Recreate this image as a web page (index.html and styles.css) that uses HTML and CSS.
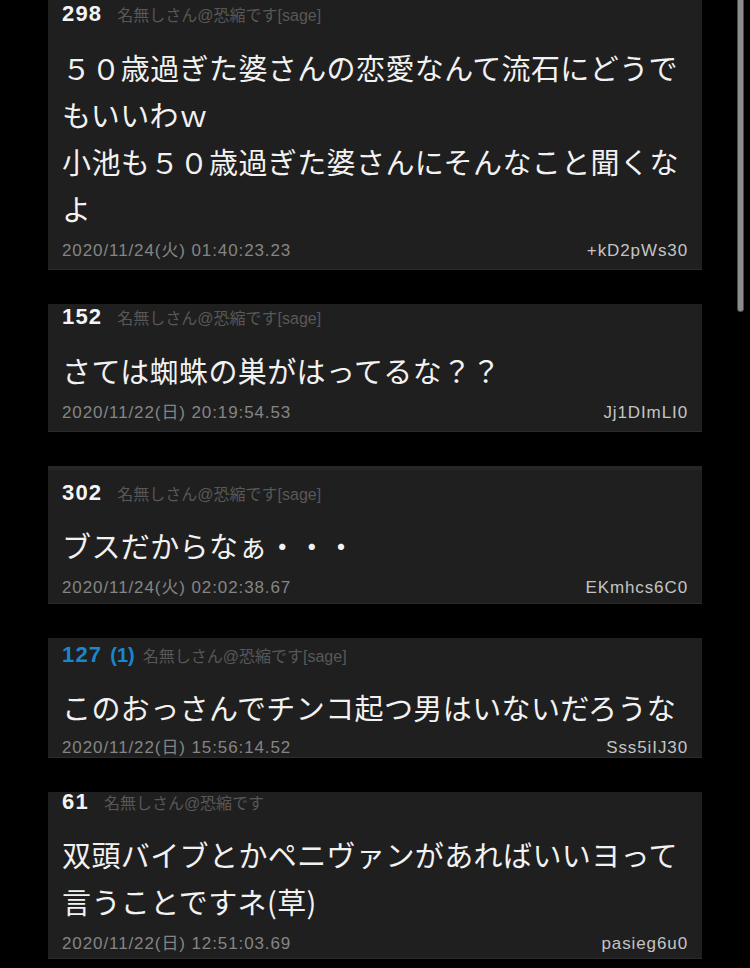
FILE: index.html
```html
<!DOCTYPE html>
<html lang="ja">
<head>
<meta charset="utf-8">
<link rel="stylesheet" href="styles.css">
</head>
<body>
<div class="list">
  <article class="card card--p1">
    <div class="head"><span class="num">298</span><span class="name">名無しさん@恐縮です[sage]</span></div>
    <div class="text">５０歳過ぎた婆さんの恋愛なんて流石にどうでもいいわｗ<br>小池も５０歳過ぎた婆さんにそんなこと聞くなよ</div>
    <div class="foot"><span class="date">2020/11/24(火) 01:40:23.23</span><span class="id">+kD2pWs30</span></div>
  </article>
  <article class="card card--p2">
    <div class="head"><span class="num">152</span><span class="name">名無しさん@恐縮です[sage]</span></div>
    <div class="text">さては蜘蛛の巣がはってるな？？</div>
    <div class="foot"><span class="date">2020/11/22(日) 20:19:54.53</span><span class="id">Jj1DImLI0</span></div>
  </article>
  <article class="card card--p3">
    <div class="head"><span class="num">302</span><span class="name">名無しさん@恐縮です[sage]</span></div>
    <div class="text text--tight">ブスだからなぁ・・・</div>
    <div class="foot"><span class="date">2020/11/24(火) 02:02:38.67</span><span class="id">EKmhcs6C0</span></div>
  </article>
  <article class="card card--p4">
    <div class="head"><span class="num num--link">127</span><span class="reply">(1)</span><span class="name">名無しさん@恐縮です[sage]</span></div>
    <div class="text text--tight">このおっさんでチンコ起つ男はいないだろうな</div>
    <div class="foot foot--cut"><span class="date">2020/11/22(日) 15:56:14.52</span><span class="id">Sss5iIJ30</span></div>
  </article>
  <article class="card card--p5">
    <div class="head"><span class="num">61</span><span class="name">名無しさん@恐縮です</span></div>
    <div class="text text--tight">双頭バイブとかペニヴァンがあればいいヨって言うことですネ(草)</div>
    <div class="foot"><span class="date">2020/11/22(日) 12:51:03.69</span><span class="id">pasieg6u0</span></div>
  </article>
</div>
<div class="scrollbar"></div>
</body>
</html>
```
FILE: styles.css
```css
html, body {
  margin: 0;
  padding: 0;
  background: #000;
}
body {
  font-family: "Liberation Sans", "Noto Sans CJK JP", sans-serif;
  overflow: hidden;
  height: 968px;
}
.list {
  display: flex;
  flex-direction: column;
  gap: 34px;
  padding-left: 48px;
  width: 654px;
}
.card {
  background: #1f1f1f;
  border-bottom: 1px solid #2b2b2b;
  box-sizing: border-box;
  padding: 0 14px;
}
.card--p1 { padding-top: 4px; padding-bottom: 7px; }
.card--p2 { padding-top: 3px; padding-bottom: 7px; }
.card--p3 { padding-top: 13px; padding-bottom: 4px; border-top: 4px solid #262626; }
.card--p4 { padding-top: 7px; padding-bottom: 0; }
.card--p5 { padding-top: 0; padding-bottom: 3px; }

.head {
  display: flex;
  align-items: baseline;
  height: 20px;
  line-height: 20px;
  white-space: nowrap;
}
.num {
  font-family: "Liberation Sans", sans-serif;
  font-weight: bold;
  font-size: 22px;
  letter-spacing: 1.2px;
  color: #f4f4f4;
  margin-right: 15px;
}
.num--link {
  color: #1a86d0;
  margin-right: 8px;
}
.reply {
  font-family: "Liberation Sans", sans-serif;
  font-weight: bold;
  font-size: 20px;
  color: #1a86d0;
  margin-right: 8px;
}
.name {
  font-family: "Liberation Sans", "Noto Sans CJK JP", sans-serif;
  font-size: 16px;
  color: #585858;
}
.text {
  margin-top: 20px;
  font-family: "Noto Sans CJK JP", sans-serif;
  font-size: 29px;
  letter-spacing: 0.4px;
  line-height: 47px;
  color: #f2f2f2;
}
.text--tight { margin-top: 19px; }
.foot {
  margin-top: 8px;
  display: flex;
  justify-content: space-between;
  align-items: center;
  line-height: 22px;
  font-family: "Liberation Sans", "Noto Sans CJK JP", sans-serif;
  font-size: 17px;
  letter-spacing: 0.9px;
}
.foot--cut { line-height: 18px; }
.date { color: #858585; }
.id { color: #c4c4c4; }

.scrollbar {
  position: fixed;
  top: -4px;
  left: 737px;
  width: 5px;
  height: 314px;
  background: #8c8c8c;
  border: 1px solid #4a4a4a;
  border-radius: 3px;
}
```
